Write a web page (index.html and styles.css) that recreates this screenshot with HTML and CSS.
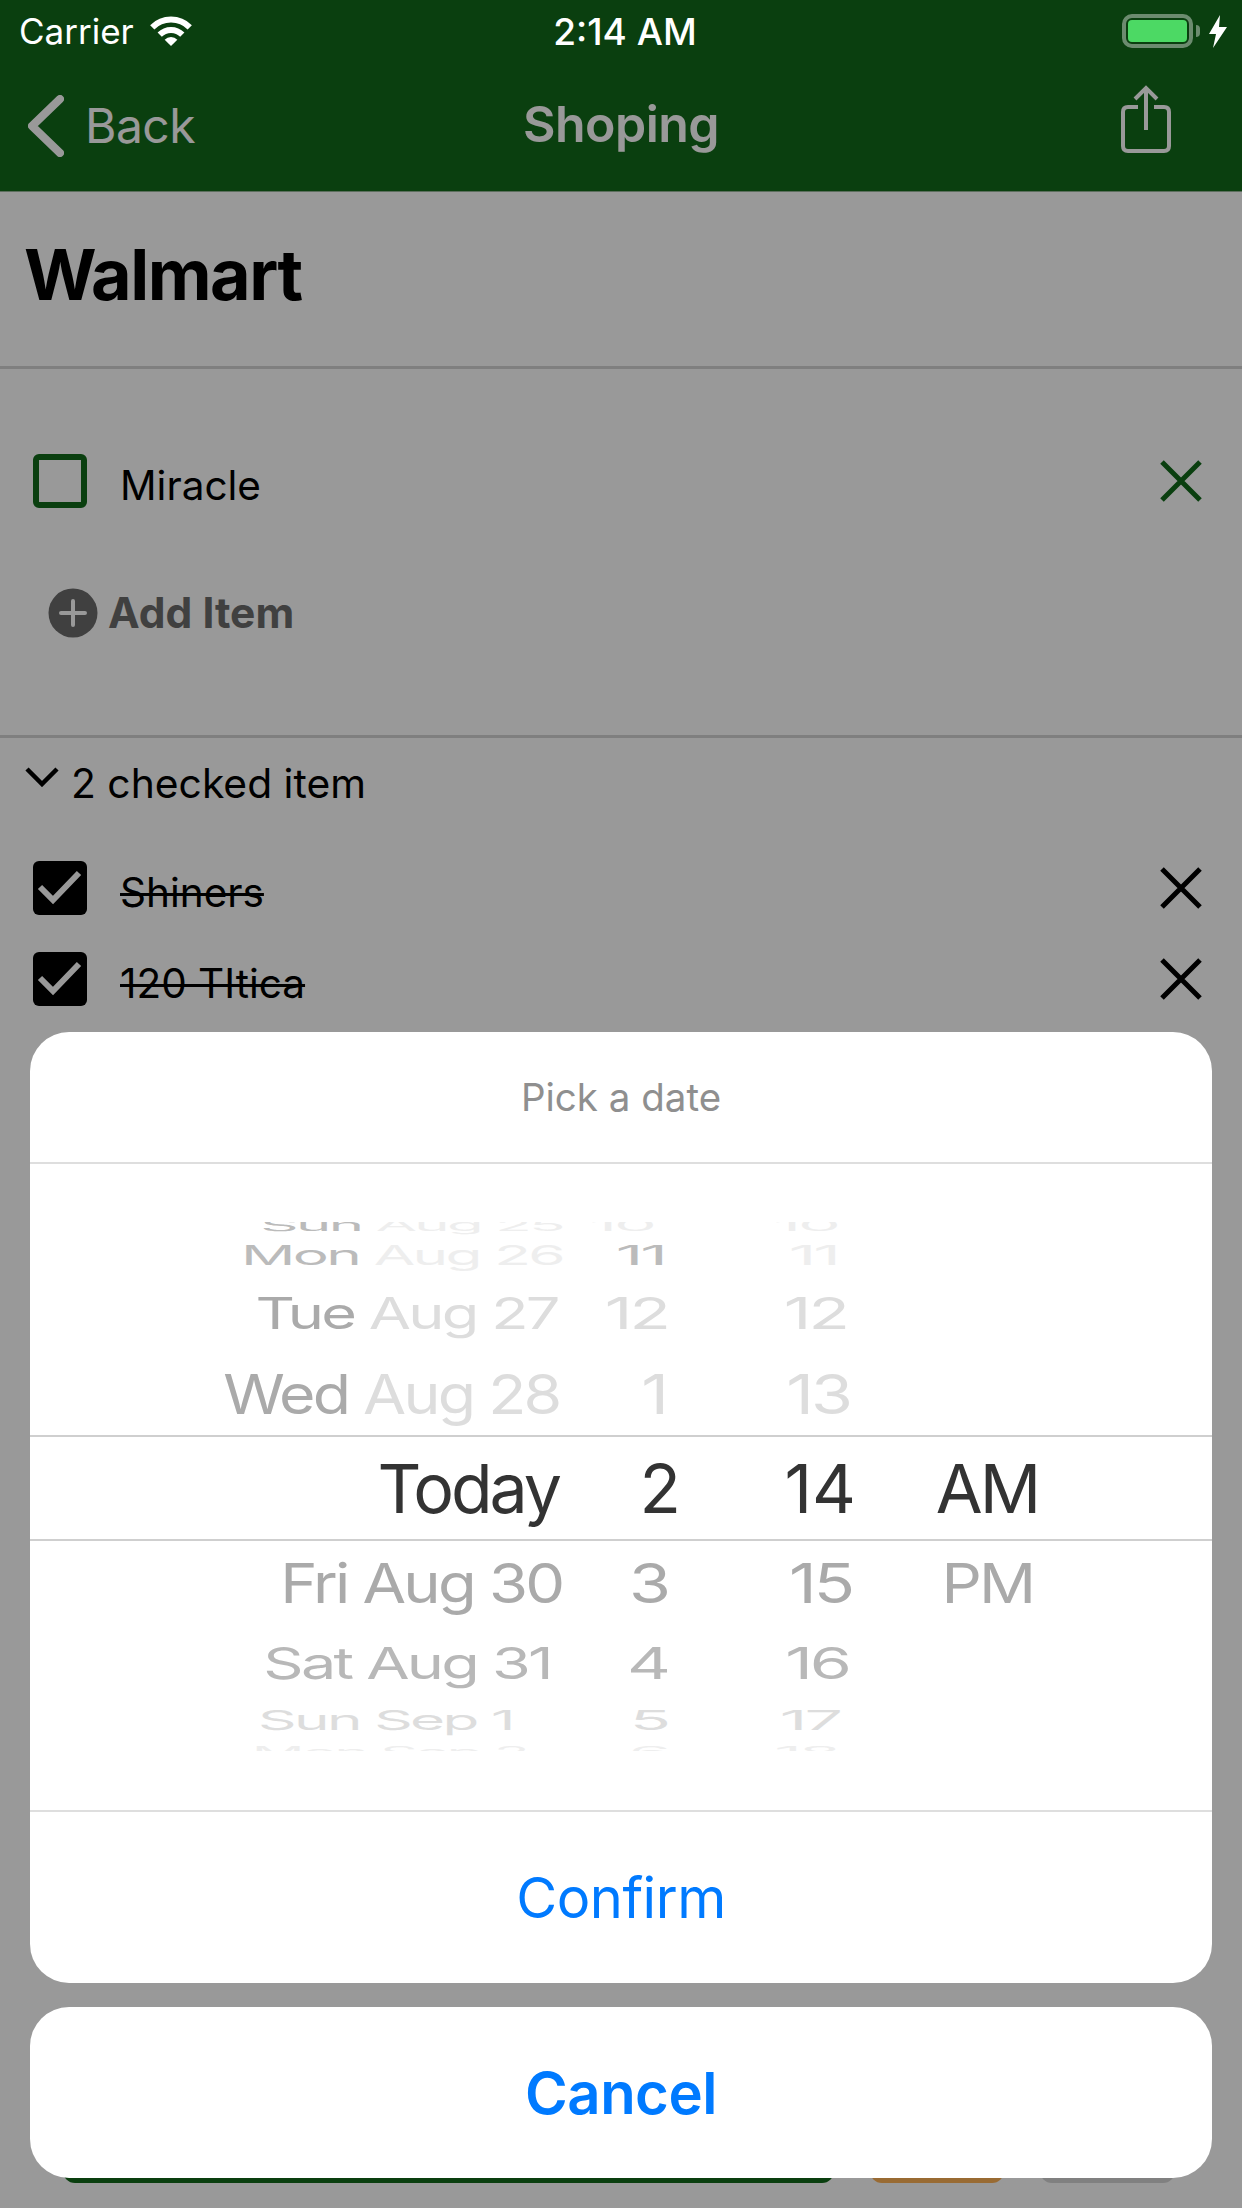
FILE: index.html
```html
<!DOCTYPE html>
<html lang="en">
<head>
    <meta charset="UTF-8">
    <meta name="viewport" content="width=device-width, initial-scale=1.0">
    <title>Shoping</title>
    <link rel="stylesheet" href="styles.css">
</head>
<body>
    <div class="page">
        <header class="nav">
            <a class="nav-back">
                <svg class="back-icon" viewBox="0 0 36 62"><path d="M32 4 L4 31 L32 58"/></svg>
                <span>Back</span>
            </a>
            <h2 class="nav-title">Shoping</h2>
            <svg class="share-icon" viewBox="0 0 54 68">
                <path d="M19 22 H9 Q4 22 4 27 V61 Q4 66 9 66 H45 Q50 66 50 61 V27 Q50 22 45 22 H35"/>
                <path d="M27 3 V45 M16 14 L27 3 L38 14"/>
            </svg>
        </header>

        <div class="list-title">
            <h1>Walmart</h1>
        </div>

        <section class="open-items">
            <div class="item">
                <span class="box"></span>
                <span class="item-name">Miracle</span>
                <svg class="remove remove-green" viewBox="0 0 42 42"><path d="M2 2 L40 40 M40 2 L2 40"/></svg>
            </div>
            <div class="add-item">
                <svg class="plus-icon" viewBox="0 0 50 50">
                    <circle cx="25" cy="25" r="24.5"/>
                    <path d="M25 13 V37 M13 25 H37"/>
                </svg>
                <span>Add Item</span>
            </div>
        </section>

        <section class="checked-items">
            <div class="checked-head">
                <svg class="chevron" viewBox="0 0 34 20"><path d="M2 2 L17 17 L32 2"/></svg>
                <span>2 checked item</span>
            </div>
            <div class="item item-done">
                <span class="box box-on"><svg viewBox="0 0 54 54"><path d="M7 26 L20 39 L46 12"/></svg></span>
                <span class="item-name">Shiners</span>
                <svg class="remove" viewBox="0 0 42 42"><path d="M2 2 L40 40 M40 2 L2 40"/></svg>
            </div>
            <div class="item item-done">
                <span class="box box-on"><svg viewBox="0 0 54 54"><path d="M7 26 L20 39 L46 12"/></svg></span>
                <span class="item-name">120 TItica</span>
                <svg class="remove" viewBox="0 0 42 42"><path d="M2 2 L40 40 M40 2 L2 40"/></svg>
            </div>
        </section>

        <footer class="bottom-bar">
            <div class="bar-btn bar-save"></div>
            <div class="bar-btn bar-orange"></div>
            <div class="bar-btn bar-gray"></div>
        </footer>
    </div>

    <div class="backdrop">
        <div class="sheet">
            <div class="sheet-title">Pick a date</div>
            <div class="wheel">
                <div class="row row-m4">
                    <div class="day"><span><i class="far">Sun</i> <i class="fainter">Aug 25</i></span></div>
                    <div class="hour"><span class="fainter">10</span></div>
                    <div class="minute"><span class="fainter">10</span></div>
                    <div class="ampm"></div>
                </div>
                <div class="row row-m3">
                    <div class="day"><span><i class="far">Mon</i> <i class="fainter">Aug 26</i></span></div>
                    <div class="hour"><span class="far">11</span></div>
                    <div class="minute"><span class="fainter">11</span></div>
                    <div class="ampm"></div>
                </div>
                <div class="row row-m2">
                    <div class="day"><span><i class="mid">Tue</i> <i class="faint">Aug 27</i></span></div>
                    <div class="hour"><span class="faint">12</span></div>
                    <div class="minute"><span class="faint">12</span></div>
                    <div class="ampm"></div>
                </div>
                <div class="row row-m1">
                    <div class="day"><span><i class="mid">Wed</i> <i class="faint">Aug 28</i></span></div>
                    <div class="hour"><span class="faint">1</span></div>
                    <div class="minute"><span class="faint">13</span></div>
                    <div class="ampm"></div>
                </div>
                <div class="row row-now">
                    <div class="day"><span>Today</span></div>
                    <div class="hour"><span>2</span></div>
                    <div class="minute"><span>14</span></div>
                    <div class="ampm"><span>AM</span></div>
                </div>
                <div class="row row-p1">
                    <div class="day"><span class="mid">Fri Aug 30</span></div>
                    <div class="hour"><span class="mid">3</span></div>
                    <div class="minute"><span class="mid">15</span></div>
                    <div class="ampm"><span class="mid">PM</span></div>
                </div>
                <div class="row row-p2">
                    <div class="day"><span class="soft">Sat Aug 31</span></div>
                    <div class="hour"><span class="soft">4</span></div>
                    <div class="minute"><span class="soft">16</span></div>
                    <div class="ampm"></div>
                </div>
                <div class="row row-p3">
                    <div class="day day-short"><span class="faint">Sun Sep 1</span></div>
                    <div class="hour"><span class="faint">5</span></div>
                    <div class="minute"><span class="faint">17</span></div>
                    <div class="ampm"></div>
                </div>
                <div class="row row-p4">
                    <div class="day day-short"><span class="fainter">Mon Sep 2</span></div>
                    <div class="hour"><span class="fainter">6</span></div>
                    <div class="minute"><span class="fainter">18</span></div>
                    <div class="ampm"></div>
                </div>
            </div>
            <div class="sheet-btn">Confirm</div>
        </div>
        <div class="sheet sheet-btn sheet-cancel">Cancel</div>
    </div>

    <div class="statusbar">
        <div class="status-left">
            <span>Carrier</span>
            <svg class="wifi" viewBox="0 0 42 30">
                <path class="wifi-arc" d="M2.26 11.26 A26.5 26.5 0 0 1 39.74 11.26"/>
                <path class="wifi-arc" d="M9.69 18.69 A16 16 0 0 1 32.31 18.69"/>
                <path d="M21 30 L14.64 23.64 A9 9 0 0 1 27.36 23.64 Z"/>
            </svg>
        </div>
        <div class="status-time">2:14 AM</div>
        <div class="status-right">
            <div class="battery"><div class="battery-fill"></div></div>
            <div class="battery-tip"></div>
            <svg class="bolt" viewBox="0 0 18 33"><path d="M11 0 L0 19 H7 L4 33 L18 12 H10 Z"/></svg>
        </div>
    </div>
</body>
</html>
```

FILE: styles.css
```css
* {
    box-sizing: border-box;
}
body {
    margin: 0;
    width: 1242px;
    height: 2208px;
    overflow: hidden;
    position: relative;
    font-family: Inter, "Noto Sans", sans-serif;
    background-color: white;
    color: black;
}
.page {
    height: 2208px;
    display: flex;
    flex-direction: column;
}

/* nav */
.nav {
    height: 192px;
    padding: 60px 71px 0 28px;
    background-color: #116919;
    border-bottom: 1px solid #9ab89c;
    color: white;
    display: flex;
    align-items: center;
    justify-content: space-between;
    position: relative;
}
.nav-back {
    display: flex;
    align-items: center;
    gap: 21px;
    font-size: 48px;
    letter-spacing: -0.5px;
}
.back-icon {
    width: 36px;
    height: 62px;
    fill: none;
    stroke: white;
    stroke-width: 8;
    stroke-linecap: round;
    stroke-linejoin: round;
}
.nav-title {
    position: absolute;
    left: 0;
    right: 0;
    top: 92px;
    margin: 0;
    text-align: center;
    font-size: 50px;
    line-height: 64px;
    font-weight: 600;
    letter-spacing: -0.5px;
}
.share-icon {
    width: 54px;
    height: 68px;
    margin: -14px -2px 0 0;
    fill: none;
    stroke: white;
    stroke-width: 4;
}

/* list */
.list-title {
    height: 177px;
    padding: 0 24px;
    border-bottom: 3px solid #d4d4d4;
    display: flex;
    align-items: center;
}
.list-title h1 {
    margin: 0;
    font-size: 70px;
    font-weight: 700;
    letter-spacing: -1.5px;
    position: relative;
    top: -5px;
}
.open-items {
    height: 369px;
    padding-top: 85px;
    border-bottom: 3px solid #d4d4d4;
}
.item {
    height: 54px;
    padding: 0 40px 0 33px;
    display: flex;
    align-items: center;
}
.box {
    width: 54px;
    height: 54px;
    flex-shrink: 0;
    border: 6px solid #116919;
    border-radius: 6px;
}
.box-on {
    background-color: black;
    border: none;
}
.box-on svg {
    display: block;
    width: 54px;
    height: 54px;
    fill: none;
    stroke: white;
    stroke-width: 6;
}
.item-name {
    margin-left: 33px;
    font-size: 40.5px;
    position: relative;
    top: 4px;
    flex: 1;
}
.item-done .item-name {
    text-decoration: line-through;
    text-decoration-thickness: 3px;
}
.remove {
    width: 42px;
    height: 42px;
    fill: none;
    stroke: black;
    stroke-width: 5;
}
.remove-green {
    stroke: #116919;
}
.add-item {
    margin: 79px 0 0 48px;
    display: flex;
    align-items: center;
    gap: 10px;
    font-size: 42.5px;
    font-weight: 700;
    color: #6b6b6b;
}
.plus-icon {
    width: 50px;
    height: 50px;
}
.plus-icon circle {
    fill: #6b6b6b;
}
.plus-icon path {
    stroke: white;
    stroke-width: 4;
    stroke-linecap: round;
}
.checked-head {
    margin: 17px 0 0 25px;
    display: flex;
    align-items: center;
    gap: 12px;
    font-size: 40.8px;
    height: 56px;
}
.chevron {
    width: 34px;
    height: 20px;
    margin-top: -12px;
    fill: none;
    stroke: black;
    stroke-width: 4.5;
}
.checked-head + .item {
    margin-top: 50px;
}
.item-done + .item-done {
    margin-top: 37px;
}

.bottom-bar {
    margin-top: auto;
    height: 120px;
    margin-bottom: 25px;
    padding: 0 67px 0 63px;
    display: flex;
    gap: 36px;
}
.bar-btn {
    border-radius: 12px;
}
.bar-save {
    width: 771px;
    background-color: #116919;
}
.bar-orange {
    width: 134px;
    background-color: #ffb255;
}
.bar-gray {
    width: 135px;
    background-color: #d5d5d5;
}

/* date picker sheet */
.backdrop {
    position: absolute;
    inset: 0;
    padding: 0 30px 30px;
    background-color: rgba(0, 0, 0, 0.4);
    display: flex;
    flex-direction: column;
    justify-content: flex-end;
    gap: 24px;
}
.sheet {
    background-color: white;
    border-radius: 39px;
    overflow: hidden;
}
.sheet-title {
    height: 132px;
    border-bottom: 2px solid #dedede;
    display: flex;
    align-items: center;
    justify-content: center;
    font-size: 38.5px;
    color: #8f8f8f;
}
.sheet-btn {
    height: 171px;
    display: flex;
    align-items: center;
    justify-content: center;
    font-size: 56px;
    color: #007aff;
    letter-spacing: -0.5px;
}
.sheet-cancel {
    font-size: 58px;
    font-weight: 600;
}
.wheel {
    height: 648px;
    padding-top: 58px;
    border-bottom: 2px solid #dedede;
}
.row {
    display: grid;
    grid-template-columns: 533px 105px 184px 270px;
    grid-template-rows: 100%;
    overflow: hidden;
    font-size: 68px;
    letter-spacing: -3px;
    white-space: nowrap;
    color: #333;
}
.row > div {
    min-height: 0;
    display: flex;
    align-items: center;
    justify-content: flex-end;
}
.row span {
    display: block;
    transform-origin: right center;
}
.row i {
    font-style: normal;
}
.row .ampm {
    justify-content: center;
}
.row .ampm span {
    transform-origin: center;
}
.row-m4 { height: 15px; }
.row-m3 { height: 36px; }
.row-m2 { height: 80px; }
.row-m1 { height: 82px; }
.row-now {
    height: 106px;
    border-top: 2px solid #cfcfcf;
    border-bottom: 2px solid #cfcfcf;
}
.row-p1 { height: 83px; }
.row-p2 { height: 78px; }
.row-p3 { height: 36px; }
.row-p4 { height: 13px; }

/* the wheel squashes rows as they turn away from the middle */
.row-m4 span { transform: translate(-14px, -5px) scale(1, 0.24); }
.row-m3 span { transform: translateX(-3px) scale(1, 0.4); }
.row-m2 span { transform: scale(1, 0.64); }
.row-m1 span { transform: translateX(-2px) scale(1, 0.8); }
.row-p1 span { transform: scale(1, 0.8); }
.row-p2 span { transform: scale(1, 0.64); }
.row-p3 span { transform: scale(1, 0.4); }
.row-p4 span { transform: translateY(7px) scale(1, 0.24); }

.row-m4 .day span { transform: translateY(-5px) scale(0.88, 0.24); }
.row-m3 .day span { transform: scale(0.887, 0.4); }
.row-m2 .day span { transform: translateX(-5px) scale(0.9, 0.64); }
.row-m1 .day span { transform: translateX(-4px) scale(0.92, 0.8); }
.row-now .day span { transform: translateX(-4px); }
.row-now .hour span { transform: translateX(10px); }
.row-now .minute span {
    letter-spacing: 0;
    transform: translateX(4px);
}
.row-p1 .day span { transform: translateX(-1px) scale(0.93, 0.8); }
.row-p1 .ampm span { transform: scale(0.93, 0.8); }
.row-p2 .day span { transform: translateX(-12px) scale(0.925, 0.64); }
.row-p3 .day span { transform: scale(0.885, 0.4); }
.row-p4 .day span { transform: translate(14px, 7px) scale(0.86, 0.24); }
.row-m3 .minute span { transform: translateX(-14px) scale(1, 0.4); }
.row-m2 .minute span { transform: translateX(-5px) scale(1, 0.64); }
.row-p2 .minute span { transform: translateX(-3px) scale(1, 0.64); }
.row-p3 .minute span { transform: translateX(-12px) scale(1, 0.4); }
.row-p4 .minute span { transform: translate(-14px, 7px) scale(1, 0.24); }
.day-short {
    padding-right: 50px;
}

.mid { color: #aaa; }
.soft { color: #b8b8b8; }
.far { color: #bbb; }
.faint { color: #ddd; }
.fainter { color: #eee; }

/* status bar sits above the dim layer */
.statusbar {
    position: absolute;
    top: 0;
    left: 0;
    right: 0;
    height: 62px;
    padding: 0 15px 0 19px;
    display: flex;
    align-items: center;
    justify-content: space-between;
    color: white;
    font-size: 35px;
}
.status-left {
    display: flex;
    align-items: center;
    gap: 16px;
}
.wifi {
    width: 42px;
    height: 30px;
    fill: white;
}
.wifi-arc {
    fill: none;
    stroke: white;
    stroke-width: 6;
}
.status-time {
    position: absolute;
    left: 8px;
    right: 0;
    text-align: center;
    font-size: 37px;
    font-weight: 500;
}
.status-right {
    display: flex;
    align-items: center;
}
.battery {
    width: 71px;
    height: 34px;
    padding: 2px;
    border: 4px solid rgba(255, 255, 255, 0.4);
    border-radius: 10px;
}
.battery-fill {
    height: 100%;
    background-color: #4cd964;
    border-radius: 4px;
}
.battery-tip {
    width: 4px;
    height: 12px;
    margin-left: 3px;
    background-color: rgba(255, 255, 255, 0.4);
    border-radius: 0 4px 4px 0;
}
.bolt {
    width: 18px;
    height: 33px;
    margin-left: 9px;
    fill: white;
}
```
